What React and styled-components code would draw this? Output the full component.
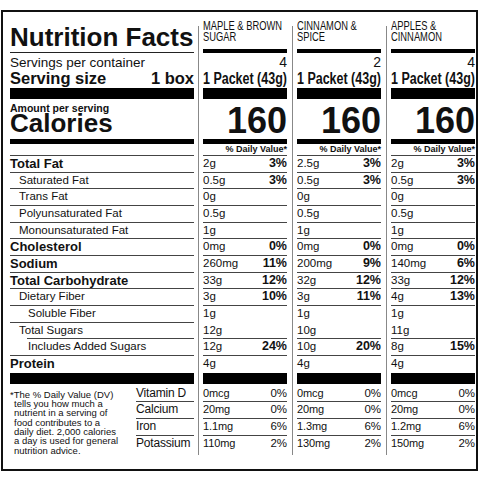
import styled, { createGlobalStyle } from "styled-components";

const GlobalStyle = createGlobalStyle`
    body {
        margin: 0;
        background: #fff;
        color: #111;
        font-family: "Liberation Sans", Arial, sans-serif;
    }
`;

const Label = styled.div`
    box-sizing: border-box;
    width: 477px;
    margin: 10px 0 0 1px;
    border: 2px solid #111;
    padding: 0 1px 14px 7px;
`;

const Row = styled.div`
    display: grid;
    grid-template-columns: 188px 94px 94px 89px;
`;

const Side = styled.div`
    margin-right: 4px;
`;

const NutLabel = styled.div`
    margin-right: 4px;
    margin-left: ${(p) => p.$lineIndent || 0}px;
    text-indent: ${(p) => (p.$indent || 0) - (p.$lineIndent || 0)}px;
    border-bottom: 1px solid ${(p) => (p.$line ? "#444" : "transparent")};
    font-size: ${(p) => (p.$bold ? "13px" : "11.5px")};
    font-weight: ${(p) => (p.$bold ? 700 : 400)};
    line-height: 15.65px;
    white-space: nowrap;
`;

const Cell = styled.div`
    border-left: 1px solid #888;
    padding-left: 4px;
    & > * {
        width: 84px;
    }
`;

const HeadCell = styled.div`
    padding-left: 5px;
    background: linear-gradient(#888, #888) 0 14px / 1px 100% no-repeat;
    & > * {
        width: 84px;
    }
`;

// condensed type: the label face is a narrow Helvetica, squeeze Liberation Sans
const Squeeze = styled.span`
    display: inline-block;
    white-space: nowrap;
    transform: scaleX(${(p) => p.$sx});
    transform-origin: left center;
`;

const Title = styled.h1`
    margin: 0;
    padding-top: 10px;
    font-size: 26px;
    line-height: 30px;
    font-weight: 700;
    white-space: nowrap;
    border-bottom: 1px solid #222;
`;

const Flavor = styled.div`
    padding-top: 8px;
    height: 22px;
    font-size: 13px;
    line-height: 11px;
`;

const Bar = styled.div`
    height: ${(p) => p.$h}px;
    margin-top: ${(p) => p.$mt || 0}px;
    background: #000;
`;

const Servings = styled.div`
    padding-top: 2px;
    font-size: ${(p) => (p.$num ? "14px" : "13.5px")};
    line-height: 15px;
    text-align: ${(p) => (p.$num ? "right" : "left")};
    white-space: nowrap;
`;

const ServingSize = styled.div`
    display: flex;
    justify-content: space-between;
    font-size: 16.5px;
    line-height: 17px;
    font-weight: 700;
    white-space: nowrap;
`;

const Packet = styled.div`
    font-size: 16px;
    line-height: 17px;
    font-weight: 700;
    white-space: nowrap;
`;

const Amount = styled.div`
    padding-top: 4px;
    font-size: 10.5px;
    line-height: 10px;
    font-weight: 700;
`;

const Calories = styled.div`
    margin-top: -3px;
    padding-bottom: 3px;
    font-size: 26px;
    line-height: 26px;
    font-weight: 700;
`;

const Big = styled.div`
    padding-top: 4px;
    font-size: 36px;
    line-height: 36px;
    font-weight: 700;
    text-align: right;
`;

const DVHead = styled.div`
    height: 11px;
    font-size: 9px;
    line-height: 11px;
    font-weight: 700;
    text-align: right;
    white-space: nowrap;
    border-bottom: 1px solid #444;
`;

const EmptySide = styled.div`
    margin-right: 4px;
    height: 11px;
    border-bottom: 1px solid #444;
`;

const Value = styled.div`
    display: flex;
    justify-content: space-between;
    line-height: 15.65px;
    border-bottom: 1px solid ${(p) => (p.$line ? "#444" : "transparent")};
    white-space: nowrap;
`;

const Amt = styled.span`
    font-size: ${(p) => (p.$vit ? "11px" : "11.5px")};
    letter-spacing: ${(p) => (p.$vit ? "-0.1px" : "0")};
`;

const Pct = styled.span`
    font-size: ${(p) => (p.$vit ? "11.5px" : "12.5px")};
    font-weight: ${(p) => (p.$vit ? 400 : 700)};
`;

const VitSide = styled.div`
    margin-right: 4px;
    display: grid;
    grid-template-columns: 1fr 58px;
`;

const Footnote = styled.p`
    margin: 0;
    padding: 5.5px 0 0 4px;
    text-indent: -4px;
    font-size: 9.5px;
    line-height: 9.33px;
    white-space: nowrap;
`;

const List = styled.div`
    padding-top: 1.5px;
`;

const VitName = styled.div`
    font-size: 12px;
    letter-spacing: -0.2px;
    line-height: 15.65px;
    border-bottom: 1px solid ${(p) => (p.$line ? "#444" : "transparent")};
    white-space: nowrap;
`;

const flavors = [
    { name: ["MAPLE & BROWN", "SUGAR"], servings: 4 },
    { name: ["CINNAMON &", "SPICE"], servings: 2 },
    { name: ["APPLES &", "CINNAMON"], servings: 4 },
];

const nutrients = [
    { label: "Total Fat", bold: true, v: [["2g", "3%"], ["2.5g", "3%"], ["2g", "3%"]] },
    { label: "Saturated Fat", indent: 9, v: [["0.5g", "3%"], ["0.5g", "3%"], ["0.5g", "3%"]] },
    { label: "Trans Fat", indent: 9, v: [["0g"], ["0g"], ["0g"]] },
    { label: "Polyunsaturated Fat", indent: 9, v: [["0.5g"], ["0.5g"], ["0.5g"]] },
    { label: "Monounsaturated Fat", indent: 9, v: [["1g"], ["1g"], ["1g"]] },
    { label: "Cholesterol", bold: true, v: [["0mg", "0%"], ["0mg", "0%"], ["0mg", "0%"]] },
    { label: "Sodium", bold: true, v: [["260mg", "11%"], ["200mg", "9%"], ["140mg", "6%"]] },
    { label: "Total Carbohydrate", bold: true, v: [["33g", "12%"], ["32g", "12%"], ["33g", "12%"]] },
    { label: "Dietary Fiber", indent: 9, v: [["3g", "10%"], ["3g", "11%"], ["4g", "13%"]] },
    { label: "Soluble Fiber", indent: 18, noColLine: true, v: [["1g"], ["1g"], ["1g"]] },
    { label: "Total Sugars", indent: 9, lineIndent: 17, v: [["12g"], ["10g"], ["11g"]] },
    { label: "Includes Added Sugars", indent: 18, v: [["12g", "24%"], ["10g", "20%"], ["8g", "15%"]] },
    { label: "Protein", bold: true, last: true, v: [["4g"], ["4g"], ["4g"]] },
];

const vitNames = ["Vitamin D", "Calcium", "Iron", "Potassium"];

const vitamins = [
    [["0mcg", "0%"], ["20mg", "0%"], ["1.1mg", "6%"], ["110mg", "2%"]],
    [["0mcg", "0%"], ["20mg", "0%"], ["1.3mg", "6%"], ["130mg", "2%"]],
    [["0mcg", "0%"], ["20mg", "0%"], ["1.2mg", "6%"], ["150mg", "2%"]],
];

const BarRow = ({ h, mt }) => (
    <Row>
        <Side><Bar $h={h} $mt={mt} /></Side>
        {flavors.map((f, i) => (
            <Cell key={i}><Bar $h={h} $mt={mt} /></Cell>
        ))}
    </Row>
);

const App = () => {
    return (
        <>
            <GlobalStyle />
            <Label>
                <Row>
                    <Side><Title>Nutrition Facts</Title></Side>
                    {flavors.map((f, i) => (
                        <HeadCell key={i}>
                            <Flavor>
                                <Squeeze $sx={0.72}>{f.name[0]}</Squeeze><br />
                                <Squeeze $sx={0.72}>{f.name[1]}</Squeeze>
                            </Flavor>
                            <Bar $h={4} $mt={7} />
                        </HeadCell>
                    ))}
                </Row>
                <Row>
                    <Side><Servings>Servings per container</Servings></Side>
                    {flavors.map((f, i) => (
                        <Cell key={i}><Servings $num>{f.servings}</Servings></Cell>
                    ))}
                </Row>
                <Row>
                    <Side><ServingSize><span>Serving size</span><span>1 box</span></ServingSize></Side>
                    {flavors.map((f, i) => (
                        <Cell key={i}><Packet><Squeeze $sx={0.78}>1 Packet (43g)</Squeeze></Packet></Cell>
                    ))}
                </Row>
                <BarRow h={11} mt={1} />
                <Row>
                    <Side>
                        <Amount>Amount per serving</Amount>
                        <Calories>Calories</Calories>
                    </Side>
                    {flavors.map((f, i) => (
                        <Cell key={i}><Big>160</Big></Cell>
                    ))}
                </Row>
                <BarRow h={5} />
                <Row>
                    <EmptySide />
                    {flavors.map((f, i) => (
                        <Cell key={i}><DVHead>% Daily Value*</DVHead></Cell>
                    ))}
                </Row>
                {nutrients.map((n) => (
                    <Row key={n.label}>
                        <NutLabel $bold={n.bold} $indent={n.indent} $lineIndent={n.lineIndent} $line={!n.last}>
                            {n.label}
                        </NutLabel>
                        {n.v.map(([amt, pct], i) => (
                            <Cell key={i}>
                                <Value $line={!n.last && !n.noColLine}>
                                    <Amt>{amt}</Amt>
                                    {pct && <Pct>{pct}</Pct>}
                                </Value>
                            </Cell>
                        ))}
                    </Row>
                ))}
                <BarRow h={11} mt={0.5} />
                <Row>
                    <VitSide>
                        <Footnote>
                            *The % Daily Value (DV)<br />
                            tells you how much a<br />
                            nutrient in a serving of<br />
                            food contributes to a<br />
                            daily diet. 2,000 calories<br />
                            a day is used for general<br />
                            nutrition advice.
                        </Footnote>
                        <List>
                            {vitNames.map((name, i) => (
                                <VitName key={name} $line={i < 3}>{name}</VitName>
                            ))}
                        </List>
                    </VitSide>
                    {vitamins.map((col, i) => (
                        <Cell key={i}>
                            <List>
                                {col.map(([amt, pct], j) => (
                                    <Value key={j} $line={j < 3}>
                                        <Amt $vit>{amt}</Amt>
                                        <Pct $vit>{pct}</Pct>
                                    </Value>
                                ))}
                            </List>
                        </Cell>
                    ))}
                </Row>
            </Label>
        </>
    );
};

export default App;
